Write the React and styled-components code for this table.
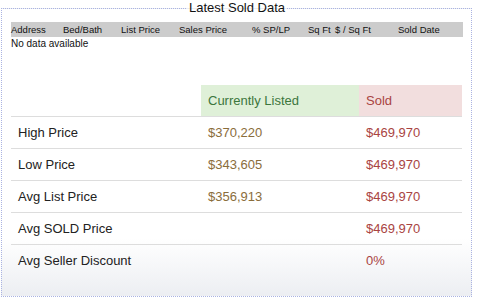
import React from 'react';
import styled, { createGlobalStyle } from 'styled-components';

const GlobalStyle = createGlobalStyle`
  body {
    margin: 0;
    background: #fff;
    font-family: "Liberation Sans", Arial, sans-serif;
  }
`;

const Panel = styled.fieldset`
  box-sizing: border-box;
  width: 471px;
  height: 297px;
  margin: 0 0 0 1px;
  padding: 0 8px 0 9px;
  border: 1px dotted #aab3e2;
  background: linear-gradient(to bottom, #fff 0%, #fff 80%, #eceef2 100%);
`;

const Legend = styled.legend`
  margin: 0 auto;
  padding: 0 2px;
  font-size: 13px;
  line-height: 16px;
  color: #111;
`;

const SoldHead = styled.div`
  display: grid;
  grid-template-columns: 52px 58px 58px 73px 56px 27px 63px 64px;
  margin-top: 6px;
  height: 15px;
  align-items: center;
  background: #cccccc;
  font-size: 9.5px;
  color: #111;
  white-space: nowrap;
`;

const Empty = styled.div`
  font-size: 10px;
  line-height: 13px;
  color: #111;
  height: 48px;
`;

const Stats = styled.div`
  display: grid;
  grid-template-columns: 190px 158px 103px;
`;

const tones = {
  plain: { bg: 'transparent', fg: '#222' },
  listed: { bg: 'transparent', fg: '#8a6d3b' },
  sold: { bg: 'transparent', fg: '#a94442' },
  listedHead: { bg: '#dff0d8', fg: '#3c763d' },
  soldHead: { bg: '#f2dede', fg: '#a94442' },
};

const Cell = styled.div`
  display: flex;
  align-items: center;
  height: 31px;
  padding: 0 7px;
  font-size: 13px;
  background: ${p => tones[p.$tone].bg};
  color: ${p => tones[p.$tone].fg};
  border-bottom: ${p => (p.$last ? 'none' : '1px solid #dddddd')};
`;

const rows = [
  ['High Price', '$370,220', '$469,970'],
  ['Low Price', '$343,605', '$469,970'],
  ['Avg List Price', '$356,913', '$469,970'],
  ['Avg SOLD Price', '', '$469,970'],
  ['Avg Seller Discount', '', '0%'],
];

const cols = ['Address', 'Bed/Bath', 'List Price', 'Sales Price', '% SP/LP', 'Sq Ft', '$ / Sq Ft', 'Sold Date'];

export default function App() {
  return (
    <>
      <GlobalStyle />
      <Panel>
        <Legend>Latest Sold Data</Legend>
        <SoldHead>
          {cols.map(c => <span key={c}>{c}</span>)}
        </SoldHead>
        <Empty>No data available</Empty>
        <Stats>
          <Cell $tone="plain"></Cell>
          <Cell $tone="listedHead">Currently Listed</Cell>
          <Cell $tone="soldHead">Sold</Cell>
          {rows.map((r, i) => {
            const last = i === rows.length - 1;
            return (
              <React.Fragment key={r[0]}>
                <Cell $tone="plain" $last={last}>{r[0]}</Cell>
                <Cell $tone="listed" $last={last}>{r[1]}</Cell>
                <Cell $tone="sold" $last={last}>{r[2]}</Cell>
              </React.Fragment>
            );
          })}
        </Stats>
      </Panel>
    </>
  );
}
